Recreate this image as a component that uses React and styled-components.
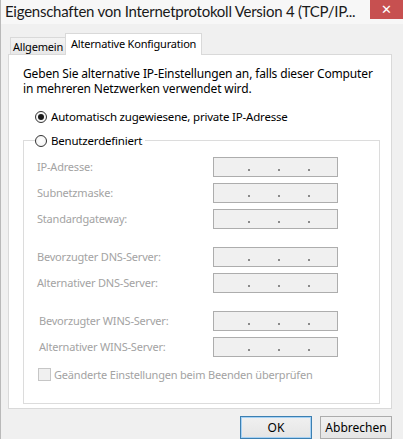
import styled, { createGlobalStyle } from 'styled-components'

const Global = createGlobalStyle`
  html, body {
    margin: 0;
    padding: 0;
    background: #f0f0f0;
  }
  body {
    font-family: "Noto Sans", "Open Sans", sans-serif;
    font-size: 12px;
    color: #000;
  }
`

const Window = styled.div`
  width: 403px;
  height: 439px;
  overflow: hidden;
  background: #f0f0f0;
  box-sizing: border-box;
  border-left: 1px solid #b9b9b9;
  display: flex;
  flex-flow: column;
`

const TitleBar = styled.div`
  height: 24px;
  display: flex;
  align-items: flex-start;
  background: #f7f7f7;
`

const Title = styled.div`
  font-family: Lato, "Noto Sans", sans-serif;
  font-size: 15px;
  letter-spacing: -0.25px;
  line-height: 22px;
  padding-left: 4px;
  color: #1a1a1a;
  white-space: nowrap;
  overflow: hidden;
  min-width: 0;
  flex: 1;
`

const Close = styled.div`
  flex: none;
  width: 33px;
  height: 19px;
  background: #c75050;
  color: #fff;
  font-size: 13px;
  line-height: 19px;
  text-align: center;
  font-family: "DejaVu Sans", sans-serif;
`

const Tabs = styled.div`
  display: flex;
  align-items: flex-end;
  margin: 9px 0 0 9px;
  height: 21px;
`

const Tab = styled.div`
  box-sizing: border-box;
  font-size: 11px;
  letter-spacing: -0.2px;
  border: 1px solid #d9d9d9;
  border-bottom: none;
  padding: 0 ${p => p.active ? '5px' : '2px'};
  height: ${p => p.active ? '22px' : '17px'};
  line-height: ${p => p.active ? '20px' : '17px'};
  background: ${p => p.active ? '#fff' : 'linear-gradient(#f3f3f3, #e8e8e8)'};
  margin-bottom: ${p => p.active ? '-1px' : '0'};
  position: relative;
  z-index: ${p => p.active ? 1 : 0};
  ${p => p.active ? 'margin-left: -1px;' : ''}
`

const Panel = styled.div`
  margin: 0 11px 0 7px;
  height: 358px;
  box-sizing: border-box;
  border: 1px solid #d9d9d9;
  background: #fff;
  padding: 11px 11px 0 14px;
`

const Intro = styled.p`
  margin: 0;
  line-height: 15px;
  letter-spacing: -0.15px;
`

const Option = styled.label`
  display: flex;
  align-items: center;
  gap: 4px;
  height: 16px;
  font-size: 11.5px;
  margin-left: ${p => p.indent || 0}px;
  margin-top: ${p => p.top || 0}px;
  letter-spacing: -0.2px;
`

const Radio = styled.span`
  box-sizing: border-box;
  width: 12px;
  height: 12px;
  border-radius: 50%;
  border: 1px solid #333;
  background: radial-gradient(circle, #fff 0%, #f0f0f0 100%);
  display: flex;
  align-items: center;
  justify-content: center;
  &::after {
    content: '';
    width: 6px;
    height: 6px;
    border-radius: 50%;
    background: ${p => p.checked ? '#1a1a1a' : 'transparent'};
  }
`

const Group = styled.fieldset`
  margin: 8px 0 0 0;
  padding: 8px 11px 21px 13px;
  border: 1px solid #dcdcdc;
  display: flex;
  flex-flow: column;
  gap: 6px;
`

const Legend = styled.legend`
  padding: 0 3px 0 0;
  margin-left: -2px;
`

const Row = styled.div`
  display: flex;
  align-items: center;
  height: 20px;
  margin-top: ${p => p.top || 0}px;
`

const Label = styled.span`
  width: 176px;
  font-size: 11px;
  color: #a3a3a3;
  letter-spacing: -0.2px;
  padding-left: ${p => p.shift || 0}px;
  box-sizing: border-box;
`

const IpBox = styled.div`
  box-sizing: border-box;
  width: 125px;
  height: 20px;
  border: 1px solid #adadad;
  background: #f0f0f0;
  display: flex;
  justify-content: center;
  gap: 28px;
  padding-left: 6px;
  span {
    width: 2px;
    height: 2px;
    background: #8a8a8a;
    margin-top: 11px;
  }
`

const Check = styled.label`
  display: flex;
  align-items: center;
  gap: 3px;
  margin-top: 4px;
  font-size: 11px;
  color: #a3a3a3;
  letter-spacing: -0.2px;
  span.box {
    width: 11px;
    height: 11px;
    border: 1px solid #c6c6c6;
    background: #f0f0f0;
    margin-left: 1px;
  }
`

const Buttons = styled.div`
  display: flex;
  justify-content: flex-end;
  gap: 8px;
  padding: 7px 11px 0 0;
`

const Button = styled.div`
  box-sizing: border-box;
  width: 72px;
  height: 23px;
  line-height: 21px;
  text-align: center;
  border: 1px solid ${p => p.primary ? '#3c7fb1' : '#acacac'};
  box-shadow: ${p => p.primary ? 'inset 0 0 0 1px #a6d2f5' : 'none'};
  background: linear-gradient(#f0f0f0, #e5e5e5);
`

const fields = [
  ['IP-Adresse:', 0, 0],
  ['Subnetzmaske:', 0, 0],
  ['Standardgateway:', 0, 0],
  ['Bevorzugter DNS-Server:', 12, -1],
  ['Alternativer DNS-Server:', 0, -1],
  ['Bevorzugter WINS-Server:', 12, 2],
  ['Alternativer WINS-Server:', 0, 2],
]

export default function App() {
  return (
    <>
      <Global />
      <Window>
        <TitleBar>
          <Title>Eigenschaften von Internetprotokoll Version 4 (TCP/IP...</Title>
          <Close>✕</Close>
        </TitleBar>
        <Tabs>
          <Tab>Allgemein</Tab>
          <Tab active>Alternative Konfiguration</Tab>
        </Tabs>
        <Panel>
          <Intro>
            Geben Sie alternative IP-Einstellungen an, falls dieser Computer in
            mehreren Netzwerken verwendet wird.
          </Intro>
          <Option indent={12} top={13}>
            <Radio checked />
            Automatisch zugewiesene, private IP-Adresse
          </Option>
          <Group>
            <Legend>
              <Option>
                <Radio />
                Benutzerdefiniert
              </Option>
            </Legend>
            {fields.map(([label, top, shift]) => (
              <Row key={label} top={top}>
                <Label shift={shift}>{label}</Label>
                <IpBox><span /><span /><span /></IpBox>
              </Row>
            ))}
            <Check>
              <span className="box" />
              Geänderte Einstellungen beim Beenden überprüfen
            </Check>
          </Group>
        </Panel>
        <Buttons>
          <Button primary>OK</Button>
          <Button>Abbrechen</Button>
        </Buttons>
      </Window>
    </>
  )
}
